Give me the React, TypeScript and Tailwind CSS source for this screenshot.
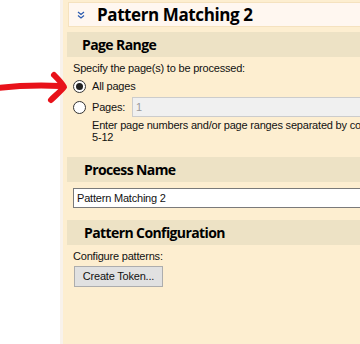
import React from "react";

const font = { fontFamily: '"Liberation Sans", Arial, sans-serif' };
const headFont = { fontFamily: '"Open Sans", "Noto Sans", sans-serif' };

function SectionHeader({ title, pl = "pl-[15px]" }: { title: string; pl?: string }) {
  return (
    <div className={`h-[25px] bg-[#ede2c5] flex items-center ${pl}`}>
      <span className="text-[14px] font-bold text-black leading-none tracking-[-0.6px]" style={headFont}>
        {title}
      </span>
    </div>
  );
}

function Radio({ checked }: { checked?: boolean }) {
  return (
    <span className="w-[13px] h-[13px] rounded-full border border-[#333] bg-white flex items-center justify-center shrink-0">
      {checked && <span className="w-[7px] h-[7px] rounded-full bg-[#222]" />}
    </span>
  );
}

export default function App() {
  return (
    <div className="relative flex w-[360px] h-[344px] bg-white overflow-hidden text-[11px] tracking-[-0.2px] text-[#111]" style={font}>
      <div className="w-[60px] shrink-0 bg-white" />
      <div className="flex-1 min-w-0 bg-[#fdeed0] border-l-[3px] border-[#f8f2ec] pl-[4px] pt-[2px] flex flex-col">
        <div className="h-[25px] bg-[#fff7f0] border border-r-0 border-[#f5e2bf] flex items-center pl-[8px] ml-[1px] whitespace-nowrap">
          <svg width="8" height="8" viewBox="0 0 8 8" className="mr-[12px]">
            <path d="M1 1 L4 3.5 L7 1 M1 4.5 L4 7 L7 4.5" fill="none" stroke="#2a5ab0" strokeWidth="1.2" />
          </svg>
          <span className="text-[17px] font-bold text-black leading-none tracking-[-0.4px]" style={headFont}>
            Pattern Matching 2
          </span>
        </div>

        <div className="mt-[5px]">
          <SectionHeader title="Page Range" />
        </div>
        <div className="pl-[6px] whitespace-nowrap">
          <div className="mt-[4px] h-[14px] leading-[14px]">Specify the page(s) to be processed:</div>
          <div className="flex items-center h-[14px] mt-[4px]">
            <Radio checked />
            <span className="ml-[6px]">All pages</span>
          </div>
          <div className="flex items-center h-[20px] mt-[4px]">
            <Radio />
            <span className="ml-[6px] w-[40px]">Pages:</span>
            <div className="flex-1 h-[20px] bg-[#f0f0f0] border border-r-0 border-[#cccccc] flex items-center pl-[3px] text-[#9a9a9a]">
              1
            </div>
          </div>
          <div className="pl-[19px] mt-[2px] leading-[12px]">
            <div>Enter page numbers and/or page ranges separated by commas. For example, 1,3,</div>
            <div>5-12</div>
          </div>
        </div>

        <div className="mt-[14px]">
          <SectionHeader title="Process Name" pl="pl-[17px]" />
        </div>
        <div className="pl-[6px] mt-[6px]">
          <div className="h-[20px] bg-white border border-r-0 border-[#7a7a7a] flex items-center pl-[3px]">
            Pattern Matching 2
          </div>
        </div>

        <div className="mt-[12px]">
          <SectionHeader title="Pattern Configuration" pl="pl-[17px]" />
        </div>
        <div className="pl-[6px]">
          <div className="mt-[4px] h-[14px] leading-[14px]">Configure patterns:</div>
          <button className="mt-[3px] ml-[1px] w-[89px] h-[21px] bg-[#e1e1e1] border border-[#adadad] text-[11px] tracking-[-0.2px] text-[#111] flex items-center justify-center" style={font}>
            Create Token...
          </button>
        </div>
      </div>

      <svg className="absolute left-0 top-[70px]" width="70" height="40" viewBox="0 0 70 40">
        <path d="M-2 18 C 15 16, 35 15, 60 16" fill="none" stroke="#e8121a" strokeWidth="6" strokeLinecap="round" />
        <path d="M54 5 C 58 9, 62 13, 64 17 C 60 22, 55 26, 51 30" fill="none" stroke="#e8121a" strokeWidth="6" strokeLinecap="round" strokeLinejoin="round" />
      </svg>
    </div>
  );
}
